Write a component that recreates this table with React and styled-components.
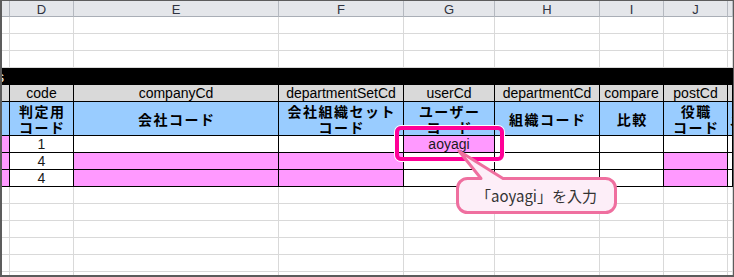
import React from "react"
import styled, { createGlobalStyle } from "styled-components"

const PINK = "#ff99ff"
const BLUE = "#99ccff"
const WHITE = "#ffffff"
const GRID = "#d9d9d9"
const INK = "#000000"

// column widths C..K (C and K are cut off at the edges)
const COLS = [8, 64, 205, 125, 91, 105, 64, 64, 5]
const LETTERS = ["", "D", "E", "F", "G", "H", "I", "J", ""]
const FIELDS = ["", "code", "companyCd", "departmentSetCd", "userCd", "departmentCd", "compare", "postCd", ""]
const LABELS = ["", "判定用\nコード", "会社コード", "会社組織セット\nコード", "ユーザー\nコード", "組織コード", "比較", "役職\nコード", "メ"]

const DATA = [
  { fills: [PINK, WHITE, WHITE, WHITE, PINK, WHITE, WHITE, WHITE, WHITE], values: { 1: "1", 4: "aoyagi" } },
  { fills: [PINK, WHITE, PINK, PINK, WHITE, WHITE, WHITE, PINK, WHITE], values: { 1: "4" } },
  { fills: [PINK, WHITE, PINK, PINK, WHITE, WHITE, WHITE, PINK, WHITE], values: { 1: "4" } },
]

const GlobalStyle = createGlobalStyle`
  html, body {
    margin: 0;
    padding: 0;
    background: #fff;
  }
  body {
    font-family: "Liberation Sans", Arial, sans-serif;
  }
`

const Frame = styled.div`
  position: relative;
  width: 734px;
  height: 277px;
  box-sizing: border-box;
  border: solid #5c5c5c;
  border-width: 1px 1px 2px 2px;
  overflow: hidden;
`

const Sheet = styled.div`
  display: grid;
  grid-template-columns: ${COLS.map((w) => `${w}px`).join(" ")};
  grid-template-rows: 16px repeat(3, 17px) 17px 17px 34px repeat(8, 17px) 3px;
`

const Cell = styled.div`
  box-sizing: border-box;
  display: flex;
  align-items: center;
  justify-content: center;
  overflow: hidden;
  white-space: nowrap;
  background: ${(p) => p.$bg || WHITE};
  border-right: 1px solid ${(p) => p.$line || GRID};
  border-bottom: ${(p) => (p.$open ? "none" : `1px solid ${p.$line || GRID}`)};
  font-size: 13px;
  color: #111;
`

const ColHead = styled(Cell)`
  background: #e4e6ea;
  border-right-color: #b5b9c0;
  border-bottom-color: #a9aeb6;
  color: #2f3340;
  font-size: 13px;
  padding-top: 1px;
`

const Banner = styled.div`
  grid-column: 1 / -1;
  background: #000;
  color: #fff;
  font-size: 14px;
  line-height: 16px;
  display: flex;
  align-items: center;
  overflow: hidden;
`

const Overflow = styled.span`
  margin-left: -5px;
`

const FieldCell = styled(Cell)`
  background: #d9d9d9;
  border-right-color: ${INK};
  border-bottom-color: ${INK};
  font-size: 14px;
  line-height: 16px;
  color: #000;
`

const LabelCell = styled(Cell)`
  background: ${BLUE};
  border-right-color: ${INK};
  border-bottom-color: ${INK};
  justify-content: ${(p) => (p.$edge ? "flex-start" : "center")};
  white-space: pre;
  text-align: center;
  font-family: "Noto Sans CJK JP", sans-serif;
  font-weight: 700;
  font-size: 14px;
  line-height: 16px;
  letter-spacing: ${(p) => (p.$edge ? "0" : "1.5px")};
  padding-left: ${(p) => (p.$edge ? "1px" : "1.5px")};
  color: #000;
`

const DataCell = styled(Cell)`
  border-right-color: ${INK};
  border-bottom-color: ${INK};
  font-size: 14px;
  line-height: 16px;
  color: #1a1a1a;
`

const Highlight = styled.div`
  position: absolute;
  left: 393px;
  top: 125px;
  width: 109px;
  height: 35px;
  box-sizing: border-box;
  border: 4px solid #ff0096;
  border-radius: 6px;
  box-shadow: 0 0 0 1px #fff;
`

const Callout = styled.div`
  position: absolute;
  left: 446px;
  top: 139px;
  width: 175px;
  height: 80px;

  svg {
    display: block;
  }
`

const CalloutText = styled.div`
  position: absolute;
  left: 9px;
  top: 38px;
  width: 159px;
  height: 35px;
  display: flex;
  align-items: center;
  justify-content: center;
  font-family: "Noto Sans CJK JP", sans-serif;
  font-size: 15px;
  color: #333;
  white-space: nowrap;
`

const range = (n) => Array.from({ length: n }, (_, i) => i)

const App = () => (
  <>
    <GlobalStyle />
    <Frame>
      <Sheet>
        {LETTERS.map((l, i) => (
          <ColHead key={`h${i}`}>{l}</ColHead>
        ))}

        {range(3).map((r) =>
          COLS.map((_, c) => <Cell key={`t${r}-${c}`} />)
        )}

        <Banner>
          <Overflow>s</Overflow>
        </Banner>

        {FIELDS.map((f, i) => (
          <FieldCell key={`f${i}`}>{f}</FieldCell>
        ))}

        {LABELS.map((l, i) => (
          <LabelCell key={`l${i}`} $edge={i === LABELS.length - 1}>
            {l}
          </LabelCell>
        ))}

        {DATA.map((row, r) =>
          row.fills.map((bg, c) => (
            <DataCell key={`d${r}-${c}`} $bg={bg}>
              {row.values[c] || ""}
            </DataCell>
          ))
        )}

        {range(5).map((r) =>
          COLS.map((_, c) => <Cell key={`e${r}-${c}`} />)
        )}

        {COLS.map((_, c) => (
          <Cell key={`p${c}`} $open />
        ))}
      </Sheet>

      <Highlight />

      <Callout>
        <svg width="175" height="80" viewBox="0 0 175 80">
          <path
            d="M19.5 38.5 H33 L11 11 L55 38.5 H157.5 A10 10 0 0 1 167.5 48.5 V62.5 A10 10 0 0 1 157.5 72.5 H19.5 A10 10 0 0 1 9.5 62.5 V48.5 A10 10 0 0 1 19.5 38.5 Z"
            fill="#fdeef8"
            stroke="#ef6f9f"
            strokeWidth="3"
            strokeLinejoin="round"
          />
        </svg>
        <CalloutText>「aoyagi」を入力</CalloutText>
      </Callout>
    </Frame>
  </>
)

export default App
